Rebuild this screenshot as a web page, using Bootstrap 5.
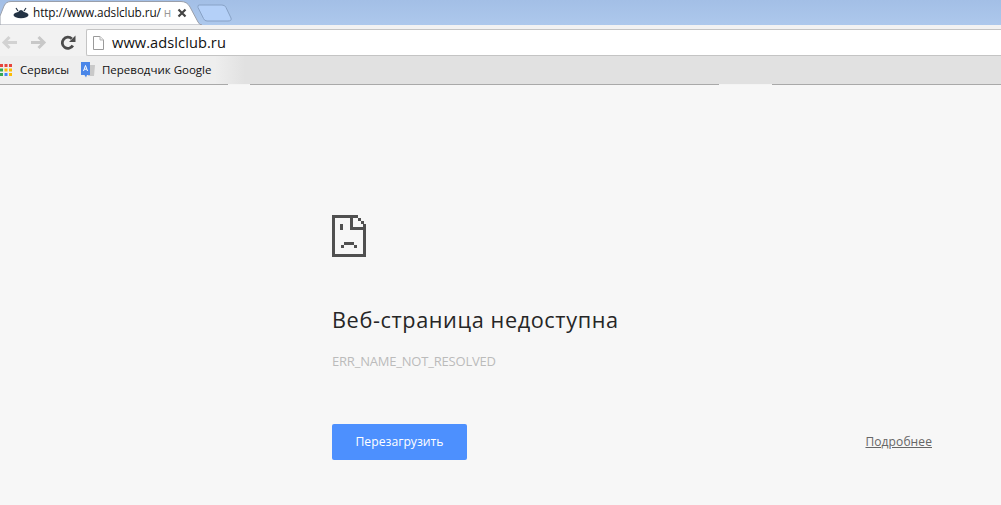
<!DOCTYPE html>
<html lang="ru">
<head>
<meta charset="utf-8">
<title>Веб-страница недоступна</title>
<link href="https://cdn.jsdelivr.net/npm/bootstrap@5.3.0/dist/css/bootstrap.min.css" rel="stylesheet">
<style>
html,body{height:505px;overflow:hidden}
body{background:#f7f7f7;font-family:"Open Sans","Noto Sans",sans-serif;color:#222}
.chrome-ui{height:85px}
.tabstrip{height:25px;background:linear-gradient(#a3bfe6,#adc8ec);position:relative;overflow:hidden}
.tab-shape{position:absolute;left:0;top:0}
.tab-label{position:relative;height:25px;padding-left:13px;width:190px;font-size:11.8px;white-space:nowrap}
.tab-title{color:#111;width:143px;overflow:hidden;margin-left:4px;letter-spacing:-.1px}
.tab-fade{color:#999}
.tab-x{margin-left:1px}
.toolbar{height:31px;background:#f2f2f2;padding-left:1px}
.nav-icons{width:85px;padding-top:4px}
.nav-back{margin-left:0}
.nav-fwd{margin-left:12px}
.nav-reload{margin-left:13px}
.omnibox{height:27px;margin-top:4px;flex:1;background:#fff;border:1px solid #c4c4c4;border-right:0;border-radius:2px 0 0 2px;padding-left:6px;font-size:14.6px;color:#111;letter-spacing:.08px}
.bookmarks{height:29px;padding-bottom:2px;background-color:#e1e1e1;background-image:linear-gradient(90deg,#a9a9a9 228px,#f4f4f4 228px,#f4f4f4 250px,#a9a9a9 250px,#a9a9a9 719px,#f4f4f4 719px,#f4f4f4 772px,#a9a9a9 772px),linear-gradient(90deg,#eeeeee 215px,#e1e1e1 245px);background-size:100% 1px,100% 100%;background-position:0 100%,0 0;background-repeat:no-repeat;font-size:11.5px;color:#111}
.bm-item{white-space:nowrap}
.bm-apps{margin-left:0}
.bm-apps-label{margin-left:7px}
.bm-translate{margin-left:11px}
.bm-translate-label{margin-left:6px}
.err-page{padding:130px 69px 0 332px}
.err-title{font-size:21.7px;font-weight:400;color:#262626;margin:48px 0 0;line-height:30px;letter-spacing:.6px}
.err-code{font-size:13px;color:#bbb;margin:17px 0 0;line-height:18px;letter-spacing:-.2px}
.err-actions{margin-top:54px}
.reload-btn{width:135px;height:36px;background:#4d90fe;border:0;border-radius:2px;color:#fff;font-size:12.2px;padding:0;--bs-btn-hover-bg:#4d90fe;--bs-btn-hover-color:#fff}
.more-link{font-size:12px;color:#666;letter-spacing:.1px}
</style>
</head>
<body>
<div class="chrome-ui">
  <div class="tabstrip">
    <svg class="tab-shape" width="240" height="25" viewBox="0 0 240 25">
      <path d="M199 5H222Q225 5 226 7.500L231 18Q232 21 228 21H207Q204.500 21 203.500 18.500L198 7.500Q197.500 5 199 5Z" fill="#b4d0f8" stroke="#88a2c6"/>
      <path d="M0 25V16L4 6Q6 1.500 11 1.500H181Q187 1.500 190 7L198 22Q199.500 25 202 25Z" fill="#fff" stroke="#9a9faa"/>
    </svg>
    <div class="tab-label d-flex align-items-center">
      <svg width="16" height="12" viewBox="0 0 16 12"><ellipse cx="8" cy="8" rx="7.500" ry="3.200" fill="#233244"/><path d="M4.500 6Q8 0 11.500 6Z" fill="#233244"/><path d="M5 4L3 1M11 4L13 1" stroke="#233244" stroke-width="1.200"/></svg>
      <span class="tab-title">http://www.adslclub.ru/ <span class="tab-fade">н</span></span>
      <svg class="tab-x" width="10" height="10" viewBox="0 0 10 10"><path d="M1.500 1.500L8.500 8.500M8.500 1.500L1.500 8.500" stroke="#444" stroke-width="2.200"/></svg>
    </div>
  </div>
  <div class="toolbar d-flex">
    <div class="nav-icons d-flex align-items-center">
      <svg class="nav-back" width="17" height="15" viewBox="0 0 17 15"><path d="M16 7.500H3M8.500 2L3 7.500L8.500 13" fill="none" stroke="#d2d2d2" stroke-width="3"/></svg>
      <svg class="nav-fwd" width="17" height="15" viewBox="0 0 17 15"><path d="M1 7.500H14M8.500 2L14 7.500L8.500 13" fill="none" stroke="#c8c8c8" stroke-width="3"/></svg>
      <svg class="nav-reload" width="16" height="16" viewBox="0 0 16 16"><path d="M12.800 10.500A5.600 5.600 0 1 1 11.800 3.800" fill="none" stroke="#4c4c4c" stroke-width="2.800"/><path d="M9 7H15.500V0.500Z" fill="#4c4c4c"/></svg>
    </div>
    <div class="omnibox d-flex align-items-center gap-2">
      <svg width="11" height="14" viewBox="0 0 11 14"><path d="M.5.500H7L10.500 4V13.500H.5Z" fill="#fff" stroke="#9a9a9a"/><path d="M7 .5V4H10.500" fill="#eee" stroke="#b5b5b5"/></svg>
      <span>www.adslclub.ru</span>
    </div>
  </div>
  <div class="bookmarks d-flex align-items-center">
    <div class="bm-item d-flex align-items-center bm-apps">
      <svg width="13" height="14" viewBox="0 0 13 14">
        <rect x="0" y="1" width="3" height="3" fill="#e8453c"/><rect x="4.500" y="1" width="3" height="3" fill="#e8453c"/><rect x="9" y="1" width="3" height="3" fill="#e8453c"/>
        <rect x="0" y="5.500" width="3" height="3" fill="#34a853"/><rect x="4.500" y="5.500" width="3" height="3" fill="#fbbc05"/><rect x="9" y="5.500" width="3" height="3" fill="#fbbc05"/>
        <rect x="0" y="10" width="3" height="3" fill="#34a853"/><rect x="4.500" y="10" width="3" height="3" fill="#4285f4"/><rect x="9" y="10" width="3" height="3" fill="#fbbc05"/>
      </svg>
      <span class="bm-apps-label">Сервисы</span>
    </div>
    <div class="bm-item d-flex align-items-center bm-translate">
      <svg width="16" height="17" viewBox="0 0 16 17"><path d="M8 4H15L14 15H8Z" fill="#c9c9c9"/><path d="M1 1H10V14H7L6 16.500L4.500 14H1Z" fill="#4a86e8"/><path d="M3.500 10L5.500 4.500L7.500 10M4.300 8.200H6.700" fill="none" stroke="#fff" stroke-width="1"/></svg>
      <span class="bm-translate-label">Переводчик Google</span>
    </div>
  </div>
</div>
<main class="err-page">
  <svg class="d-block" width="34" height="42" viewBox="0 0 34 42" shape-rendering="crispEdges" fill="#505050">
    <path d="M0 0H26V3H21V12H34V42H0ZM3 3V39H31V15H18V3Z" fill-rule="evenodd"/>
    <path d="M26 3H29V6H32V9H34V12H31V9H29V6H26Z"/>
    <rect x="8" y="9" width="3" height="6"/>
    <path d="M12 27H22V30H25V33H22V30H12V33H9V30H12Z"/>
  </svg>
  <h1 class="err-title">Веб-страница недоступна</h1>
  <p class="err-code">ERR_NAME_NOT_RESOLVED</p>
  <div class="err-actions d-flex justify-content-between align-items-center">
    <button type="button" class="btn reload-btn">Перезагрузить</button>
    <a href="#" class="more-link">Подробнее</a>
  </div>
</main>
<script src="https://cdn.jsdelivr.net/npm/bootstrap@5.3.0/dist/js/bootstrap.bundle.min.js"></script>
</body>
</html>
